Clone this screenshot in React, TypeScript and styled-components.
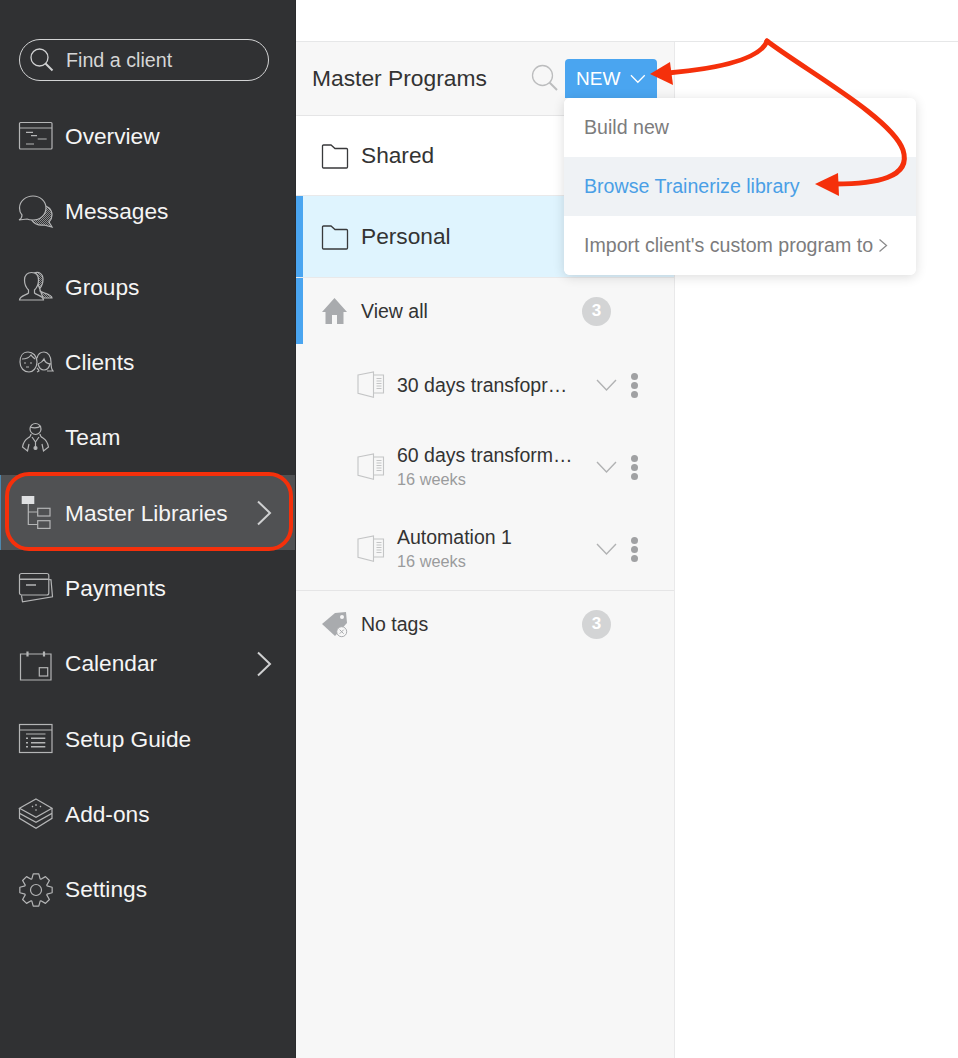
import React from 'react';
import styled, { createGlobalStyle } from 'styled-components';
import type { ReactNode } from 'react';

const GlobalStyle = createGlobalStyle`
  html, body {
    margin: 0;
    padding: 0;
    height: 100%;
    overflow: hidden;
    background: #fff;
  }
  * {
    box-sizing: border-box;
  }
  body {
    font-family: "Liberation Sans", Arial, sans-serif;
    color: #333;
  }
`;

const Page = styled.div`
  display: grid;
  grid-template-columns: 296px 1fr;
  height: 1058px;
  position: relative;
`;

const Sidebar = styled.nav`
  background: #303133;
  padding-top: 39px;
  border-right: 1px solid #2a2b2d;
`;

const SearchPill = styled.div`
  align-items: center;
  border: 1.5px solid #d2d3d4;
  border-radius: 21px;
  color: #d6d6d6;
  display: flex;
  font-size: 19.7px;
  height: 42px;
  margin: 0 26px 17px 19px;
  padding-left: 9px;
  svg {
    margin-right: 11px;
  }
`;

const NavRow = styled.div<{ $active?: boolean }>`
  align-items: center;
  background: ${({ $active }) => ($active ? '#505153' : 'transparent')};
  border-left: ${({ $active }) => ($active ? '1px solid #4d87ad' : '0')};
  color: #f5f5f5;
  display: flex;
  font-size: 22.7px;
  height: 75.35px;
  padding-left: ${({ $active }) => ($active ? '17px' : '18px')};
  padding-top: 1.4px;
  position: relative;
`;

const NavIconBox = styled.svg`
  fill: none;
  flex: none;
  height: 36px;
  margin-right: 11px;
  stroke: #b4b5b6;
  stroke-width: 1.2;
  width: 36px;
`;

const NavChevron = styled.svg`
  fill: none;
  height: 26px;
  position: absolute;
  right: 23px;
  stroke: #cfd0d1;
  stroke-width: 2;
  width: 16px;
`;

const ActiveOutline = styled.span`
  border: 4px solid #f5300b;
  border-radius: 24px;
  bottom: -1px;
  left: 4px;
  pointer-events: none;
  position: absolute;
  right: 2px;
  top: -3px;
`;

const Main = styled.main`
  display: flex;
  flex-direction: column;
  min-width: 0;
`;

const TopBar = styled.div`
  background: #fff;
  border-bottom: 1px solid #e6e7e8;
  flex: none;
  height: 42px;
`;

const Body = styled.div`
  display: flex;
  flex: 1;
`;

const ProgramPanel = styled.section`
  background: #f7f7f7;
  border-right: 1px solid #e9e9ea;
  flex: none;
  width: 379px;
`;

const PanelHeader = styled.header`
  align-items: center;
  border-bottom: 1px solid #e5e5e6;
  display: flex;
  height: 74px;
  padding: 0 17px 1px 16px;
`;

const PanelTitle = styled.h1`
  color: #333;
  flex: 1;
  font-size: 22.8px;
  font-weight: 400;
  margin: 0;
`;

const HeaderSearch = styled.svg`
  fill: none;
  height: 28px;
  margin-right: 6px;
  stroke: #bcbdbe;
  stroke-width: 1.3;
  width: 28px;
`;

const NewWrap = styled.div`
  align-self: flex-end;
  position: relative;
`;

const NewButton = styled.button`
  align-items: center;
  appearance: none;
  background: #4aa5f0;
  border: none;
  border-radius: 4px 4px 0 0;
  color: #fff;
  display: flex;
  font-family: inherit;
  font-size: 19px;
  height: 39px;
  margin-bottom: 16px;
  padding: 0 11px 0 11px;
  width: 92px;
  svg {
    margin-left: 10px;
  }
`;

const Dropdown = styled.div`
  background: #fff;
  border-radius: 6px;
  box-shadow: 0 2px 12px rgba(0, 0, 0, 0.14);
  left: -1px;
  overflow: hidden;
  position: absolute;
  top: 39px;
  width: 352px;
  z-index: 2;
`;

const DropdownItem = styled.div<{ $highlight?: boolean }>`
  align-items: center;
  background: ${({ $highlight }) => ($highlight ? '#eff2f5' : '#fff')};
  color: ${({ $highlight }) => ($highlight ? '#4a9fe6' : '#7c7c7d')};
  display: flex;
  font-size: 19.6px;
  height: 59px;
  padding-left: 20px;
  white-space: nowrap;
  svg {
    margin-left: 5px;
  }
`;

const FolderRow = styled.div<{ $selected?: boolean }>`
  align-items: center;
  background: ${({ $selected }) => ($selected ? '#dff4fe' : '#fff')};
  border-bottom: 1px solid #e9e9ea;
  box-shadow: ${({ $selected }) => ($selected ? 'inset 7px 0 #4aa5f0' : 'none')};
  display: flex;
  font-size: 22.7px;
  height: ${({ $selected }) => ($selected ? '82px' : '80px')};
  padding-left: 25px;
  svg {
    fill: none;
    height: 26px;
    margin-right: 12px;
    stroke: #38393b;
    stroke-width: 1.3;
    width: 28px;
  }
`;

const SummaryRow = styled.div<{ $marked?: boolean }>`
  align-items: center;
  box-shadow: ${({ $marked }) => ($marked ? 'inset 7px 0 #4aa5f0' : 'none')};
  display: flex;
  font-size: 19.5px;
  height: 66px;
  padding-left: 25px;
  position: relative;
  > svg {
    fill: #a9abae;
    flex: none;
    height: 28px;
    margin-right: 12px;
    width: 28px;
  }
`;

const SummaryLabel = styled.span`
  flex: 1;
`;

const CountBadge = styled.span`
  align-items: center;
  background: #d3d4d5;
  border-radius: 50%;
  color: #fff;
  display: flex;
  font-size: 17px;
  font-weight: 700;
  height: 29px;
  justify-content: center;
  margin-right: 63px;
  width: 29px;
`;

const ProgramList = styled.div`
  border-bottom: 1px solid #e5e5e6;
`;

const ProgramRow = styled.div`
  align-items: center;
  display: flex;
  height: 82px;
  padding-left: 61px;
`;

const BookIcon = styled.svg`
  fill: none;
  flex: none;
  height: 28px;
  margin-right: 12px;
  stroke: #c4c5c6;
  stroke-width: 1.1;
  width: 28px;
`;

const ProgramText = styled.div`
  flex: 1;
  min-width: 0;
`;

const ProgramName = styled.div`
  font-size: 19.5px;
  line-height: 24px;
  white-space: nowrap;
`;

const ProgramMeta = styled.div`
  color: #9a9b9c;
  font-size: 16.3px;
  line-height: 21px;
  margin: 2px 0;
`;

const RowChevron = styled.svg`
  fill: none;
  flex: none;
  height: 14px;
  margin-right: 14px;
  stroke: #b1b2b3;
  stroke-width: 1.4;
  width: 21px;
`;

const Kebab = styled.span`
  display: flex;
  flex-direction: column;
  flex: none;
  gap: 2px;
  margin-right: 36px;
  span {
    background: #a0a1a3;
    border-radius: 50%;
    height: 7px;
    width: 7px;
  }
`;

const EmptyPane = styled.div`
  background: #fff;
  flex: 1;
`;

const Annotations = styled.svg`
  fill: none;
  height: 1058px;
  left: 0;
  pointer-events: none;
  position: absolute;
  top: 0;
  width: 958px;
  z-index: 5;
`;

const HATCH = 'url(#hatch)';

type NavEntry = { label: string; icon: ReactNode; chevron?: boolean; active?: boolean };

const gearPath = () => {
  const cx = 18;
  const cy = 18;
  const points: string[] = [];
  for (let i = 0; i < 8; i++) {
    const a = (i * Math.PI) / 4 - Math.PI / 2;
    const at = (r: number, d: number) =>
      `${(cx + r * Math.cos(a + d)).toFixed(2)} ${(cy + r * Math.sin(a + d)).toFixed(2)}`;
    points.push(at(11.8, -0.36), at(16.4, -0.17), at(16.4, 0.17), at(11.8, 0.36));
  }
  return `M${points.join('L')}Z`;
};

const navEntries: NavEntry[] = [
  {
    label: 'Overview',
    icon: (
      <>
        <rect x="1.5" y="4.5" width="32.5" height="26.5" rx="1" />
        <path d="M1.5 10H34M8 14.3h7M13 17.7h6M19.7 21h9M8 26h8" />
      </>
    ),
  },
  {
    label: 'Messages',
    icon: (
      <>
        <path
          d="M14 16c0-4 5-5 9-5 6 0 11 4 11 10 0 3-1 5-3 7l3 5-8-2c-6 1-12-2-13-7z"
          fill={HATCH}
        />
        <path
          d="M15 2c7 0 13 5 13 12 0 7-6 12-13 12-2 0-4 0-6-1l-8 1c2-1 3-3 3-5C2 19 1.500 17 1.500 14 1.500 7 8 2 15 2z"
          fill="#303133"
        />
      </>
    ),
  },
  {
    label: 'Groups',
    icon: (
      <>
        <path
          d="M16 4c5-2 9 1 9 6 0 4-1 7-3 9v3c2 2 12 3 12 7h-9z"
          fill={HATCH}
        />
        <path
          d="M1.500 31c0-4 7-5 9-7v-3c-3-3-4-6-4-10 0-5 3-7.500 7-7.500s7 2.500 7 7.500c0 4-1 7-4 10v3c2 2 9 3 9 7z"
          fill="#303133"
        />
      </>
    ),
  },
  {
    label: 'Clients',
    icon: (
      <>
        <path d="M2 18c0-6 3-10 8-10s9 4 9 10-4 10-8 10c-5 0-9-4-9-10z" />
        <path d="M4 15c4 0 7-1 9-4 1 2 3 3 4 4M6 19h2M12 19h2M8 23h3" />
        <path d="M19 14c1-4 3-6 7-6s7 4 7 10c0 4 1 8 2 9h-6M19 28l2-1c0-1-1-2-2-3M33 20c-3 0-6-2-7-5-1 2-3 4-6 5" />
        <path d="M20 20c1 4 3 6 6 6s5-2 6-6" />
      </>
    ),
  },
  {
    label: 'Team',
    icon: (
      <>
        <circle cx="17.500" cy="9" r="5.500" />
        <path d="M12 7c3 1 8 1 11-1M13 14c0 2-1 3-3 4-3 2-5 6-5.500 9l5 4 1.500-7M22 14c0 2 1 3 3 4 3 2 5 6 5.500 9l-5 4-1.500-7M14 17l3.500 5 3.500-5M17.500 22v5" />
        <circle cx="17.500" cy="28" r="1.500" fill="#b9babb" />
      </>
    ),
  },
  {
    label: 'Master Libraries',
    active: true,
    chevron: true,
    icon: (
      <>
        <rect x="3.700" y="1" width="12.600" height="8" fill="#dfe0e2" stroke="none" />
        <path d="M10.300 9v20.500h9.400M10.300 17h9.400" />
        <rect x="19.700" y="13.300" width="12.300" height="7.700" />
        <rect x="19.700" y="25.700" width="12.300" height="7.700" />
      </>
    ),
  },
  {
    label: 'Payments',
    icon: (
      <>
        <path d="M30.800 9.500L33 9.800l1.500 17-30 5-1-6.500" />
        <rect x="1.500" y="3.500" width="29.300" height="21.500" rx="2" fill="#303133" />
        <path d="M1.500 9.300h29.300M8 15h10" strokeWidth="1.500" />
      </>
    ),
  },
  {
    label: 'Calendar',
    chevron: true,
    icon: (
      <>
        <path d="M2.500 8h30.500v26H2.500z" />
        <path d="M9.500 5.500v5M26 5.500v5" strokeWidth="2.200" />
        <rect x="21.300" y="21.700" width="8.400" height="8.300" />
      </>
    ),
  },
  {
    label: 'Setup Guide',
    icon: (
      <>
        <rect x="1.500" y="3.500" width="32.500" height="28" />
        <path d="M1.500 9H34M8 13h19.500" />
        <path d="M13 17.300h14.300M13 21.700h14.300M13 25.700h14.300" strokeWidth="1.600" />
        <path d="M8 17.300h2M8 21.700h2M8 25.700h2" strokeWidth="1.600" />
      </>
    ),
  },
  {
    label: 'Add-ons',
    icon: (
      <>
        <path d="M18 3l16 9.300-16 9-16.500-9z" />
        <path d="M1.500 12.300v5l16.500 9 16-9v-5M1.500 17.300v5l16.500 10 16-10v-5" />
        <path d="M14 10l1 1M18 8v2M22 11l1-1M17 14h2" />
      </>
    ),
  },
  {
    label: 'Settings',
    icon: (
      <>
        <path d={gearPath()} strokeLinejoin="round" />
        <circle cx="18" cy="18" r="5.500" />
      </>
    ),
  },
];

const programs = [
  { name: '30 days transfopr…' },
  { name: '60 days transform…', meta: '16 weeks' },
  { name: 'Automation 1', meta: '16 weeks' },
];

const FolderIcon = () => (
  <svg viewBox="0 0 28 26">
    <path d="M1.500 3a1 1 0 0 1 1-1H10l4 3.500h11.500a1 1 0 0 1 1 1V24a1 1 0 0 1-1 1h-23a1 1 0 0 1-1-1z" />
  </svg>
);

const Book = () => (
  <BookIcon viewBox="0 0 28 28">
    <path d="M1 4l15.500-3v25.300L1 22.300z" />
    <path d="M16.500 4h10v18h-10M19.500 7.500h5M19.500 10h5M19.500 12.500h5M19.500 15h5M19.500 17.500h5" />
  </BookIcon>
);

export default function App() {
  return (
    <>
      <GlobalStyle />
      <Page>
        <Sidebar>
          <SearchPill>
            <svg width="26" height="28" viewBox="0 0 26 28" fill="none" stroke="#d0d1d2" strokeWidth="1.3">
              <circle cx="10.500" cy="11.500" r="8.500" />
              <path d="M16.500 17.500l7 7" strokeWidth="2" />
            </svg>
            Find a client
          </SearchPill>
          {navEntries.map((entry) => (
            <NavRow key={entry.label} $active={entry.active}>
              <NavIconBox viewBox="0 0 36 36">
                <defs>
                  <pattern id="hatch" width="2" height="2" patternUnits="userSpaceOnUse">
                    <rect width="1" height="1" fill="#8a8b8c" stroke="none" />
                    <rect x="1" y="1" width="1" height="1" fill="#8a8b8c" stroke="none" />
                  </pattern>
                </defs>
                {entry.icon}
              </NavIconBox>
              {entry.label}
              {entry.chevron && (
                <NavChevron viewBox="0 0 16 26">
                  <path d="M2 1.500l12 11.500-12 11.500" />
                </NavChevron>
              )}
              {entry.active && <ActiveOutline />}
            </NavRow>
          ))}
        </Sidebar>
        <Main>
          <TopBar />
          <Body>
            <ProgramPanel>
              <PanelHeader>
                <PanelTitle>Master Programs</PanelTitle>
                <HeaderSearch viewBox="0 0 28 28">
                  <circle cx="11.500" cy="11.500" r="10" />
                  <path d="M18.500 18.500l7.500 7.500" strokeWidth="2" />
                </HeaderSearch>
                <NewWrap>
                  <NewButton>
                    NEW
                    <svg width="17" height="10" viewBox="0 0 17 10" fill="none" stroke="#fff" strokeWidth="1.4">
                      <path d="M1 1l7.500 7.500L16 1" />
                    </svg>
                  </NewButton>
                  <Dropdown>
                    <DropdownItem>Build new</DropdownItem>
                    <DropdownItem $highlight>Browse Trainerize library</DropdownItem>
                    <DropdownItem>
                      Import client's custom program to
                      <svg width="10" height="15" viewBox="0 0 10 15" fill="none" stroke="#8c8c8d" strokeWidth="1.3">
                        <path d="M1.500 1.500l7 6-7 6" />
                      </svg>
                    </DropdownItem>
                  </Dropdown>
                </NewWrap>
              </PanelHeader>
              <FolderRow>
                <FolderIcon />
                Shared
              </FolderRow>
              <FolderRow $selected>
                <FolderIcon />
                Personal
              </FolderRow>
              <SummaryRow $marked>
                <svg viewBox="0 0 28 28">
                  <path d="M13.500 1L1 15h3.500v12H11v-9h5v9h6.500V15H26z" />
                </svg>
                <SummaryLabel>View all</SummaryLabel>
                <CountBadge>3</CountBadge>
              </SummaryRow>
              <ProgramList>
                {programs.map((program) => (
                  <ProgramRow key={program.name}>
                    <Book />
                    <ProgramText>
                      <ProgramName>{program.name}</ProgramName>
                      {program.meta && <ProgramMeta>{program.meta}</ProgramMeta>}
                    </ProgramText>
                    <RowChevron viewBox="0 0 21 14">
                      <path d="M1 2l9.500 10L20 2" />
                    </RowChevron>
                    <Kebab>
                      <span />
                      <span />
                      <span />
                    </Kebab>
                  </ProgramRow>
                ))}
              </ProgramList>
              <SummaryRow>
                <svg viewBox="0 0 28 28">
                  <path d="M1 14L14 3l11-1 1 11-12 13z" />
                  <circle cx="21" cy="7" r="2" fill="#f7f7f7" />
                  <circle cx="20.700" cy="21.700" r="5" fill="#f7f7f7" stroke="#a9abae" strokeWidth="1" />
                  <path d="M18.700 19.700l4 4M22.700 19.700l-4 4" stroke="#a9abae" strokeWidth="1" />
                </svg>
                <SummaryLabel>No tags</SummaryLabel>
                <CountBadge>3</CountBadge>
              </SummaryRow>
            </ProgramPanel>
            <EmptyPane />
          </Body>
        </Main>
        <Annotations viewBox="0 0 958 1058">
          <path
            d="M767 41C762 55 735 67 668 73"
            stroke="#f5300b"
            strokeWidth="5"
            strokeLinecap="round"
          />
          <path d="M650 74L670 62 673 85z" fill="#f5300b" />
          <path
            d="M767 41C805 70 892 118 903 150 912 178 875 184 835 184"
            stroke="#f5300b"
            strokeWidth="5"
            strokeLinecap="round"
          />
          <path d="M815 184L838 173 839 196z" fill="#f5300b" />
        </Annotations>
      </Page>
    </>
  );
}
